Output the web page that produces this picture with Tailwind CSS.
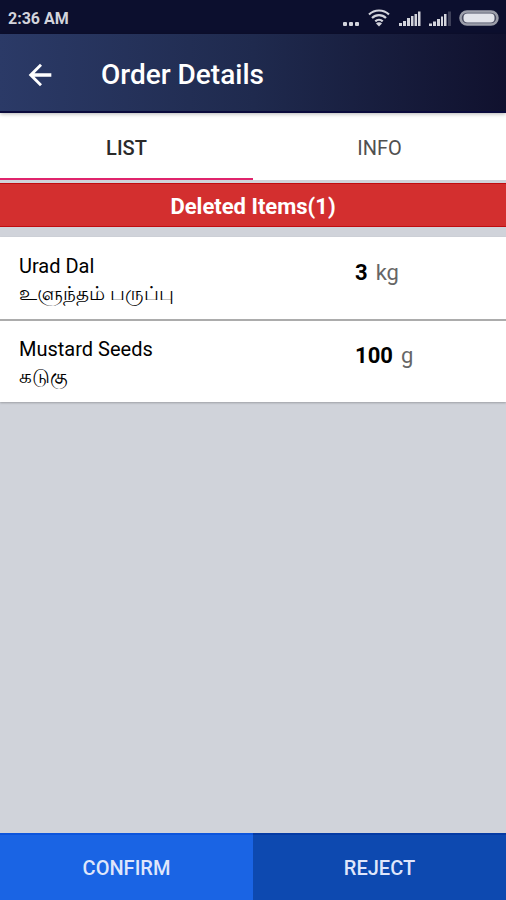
<!DOCTYPE html>
<html lang="en">
<head>
<meta charset="utf-8">
<meta name="viewport" content="width=device-width, initial-scale=1">
<title>Order Details</title>
<script src="https://cdn.jsdelivr.net/npm/@tailwindcss/browser@4"></script>
</head>
<body class="flex min-h-screen flex-col bg-[#d0d3da] font-[Roboto,'Noto_Sans',sans-serif] text-black">
  <div class="flex h-[34px] items-center justify-between bg-[#0c0f2e] pt-1 pr-[7px] pl-2 text-[#d3d4dc]">
    <span class="text-base leading-5 font-bold">2:36 AM</span>
    <div class="flex items-center">
      <svg class="mr-2 h-5 w-[18px]" viewBox="0 0 18 20" fill="currentColor" aria-hidden="true"><rect x="1" y="13" width="4" height="4" rx="1"/><rect x="7" y="13" width="4" height="4" rx="1"/><rect x="13" y="13" width="4" height="4" rx="1"/></svg>
      <svg class="mr-2 h-5 w-[22px]" viewBox="1 0 22 20" fill="none" stroke="currentColor" stroke-width="2.2" aria-hidden="true"><path d="M2 5.500a14.500 14.500 0 0 1 20 0M5 9a10 10 0 0 1 14 0M8.300 12.400a5.400 5.400 0 0 1 7.400 0"/><path d="M12 17.500l-3-3a4.200 4.200 0 0 1 6 0z" fill="currentColor" stroke="none"/></svg>
      <svg class="mr-2 h-5 w-[23px]" viewBox="0 0 23 20" fill="currentColor" aria-hidden="true"><path d="M1 14h3v3H1zM5 12h3v5H5zM9 9h3v8H9zM13 7h2.500v10H13zM16.500 5H19v12h-2.500zM20 2.500h2.500V17H20z"/></svg>
      <svg class="mr-2 h-5 w-[22px]" viewBox="0 0 22 20" fill="currentColor" aria-hidden="true"><path d="M0 14.500h3V17H0zM4 12.500h3V17H4zM8 10h3v7H8zM12 7.500h2V17h-2zM15 5h2.500v12H15z"/><path opacity=".25" d="M19 2.500h3V17h-3z"/></svg>
      <svg class="h-5 w-10" viewBox="0 0 40 20" aria-hidden="true"><rect x="1.500" y="2.500" width="37" height="13" rx="6.500" fill="#4b4d62" stroke="#9c9eaa" stroke-width="2.500"/><rect x="4.500" y="4.500" width="31" height="9" rx="4" fill="#e2e3ea"/></svg>
    </div>
  </div>

  <header class="z-10 flex h-[79px] items-center border-b-2 border-[#0a0a3c] bg-linear-to-r from-[#2b3a67] via-[#1f2a4e] to-[#10112e] pt-1 pl-6 text-white shadow-[0_1px_4px_rgba(0,0,0,0.3)]">
    <button type="button" aria-label="Back" class="flex size-8 items-center justify-center">
      <svg class="size-[34px] shrink-0" viewBox="0 0 24 24" fill="currentColor" aria-hidden="true"><path d="M20 10.800H8.130l5.290-5.390L12 4l-8 8 8 8 1.410-1.410L8.130 13.200H20z"/></svg>
    </button>
    <h1 class="ml-[45px] text-[28px] leading-8 font-medium">Order Details</h1>
  </header>

  <nav class="mb-[3px] grid h-[67px] grid-cols-2 bg-white text-center text-xl">
    <a href="#list" aria-current="page" class="flex items-center justify-center border-b-2 border-[#e0246c] pt-1 font-medium text-[#2a2a2a]">LIST</a>
    <a href="#info" class="flex items-center justify-center border-b-2 border-white pt-1 text-[#505050]">INFO</a>
  </nav>

  <main class="flex-1">
    <h2 class="flex h-11 items-center justify-center border-y border-[#c00c10] bg-[#d32f2f] pt-1 text-[22px] leading-8 font-bold text-white">Deleted Items(1)</h2>
    <ul id="list" class="mt-[10px] divide-y-2 divide-[#acacac] bg-white shadow-[0_1px_2px_rgba(0,0,0,0.25)]">
      <li class="flex h-[84px] items-start pt-4 pl-[19px]">
        <div class="w-[69%] text-xl leading-[27px]">
          <p>Urad Dal</p>
          <p lang="ta">உளுந்தம் பருப்பு</p>
        </div>
        <p class="flex gap-2 pt-1 text-[22px] leading-8"><span class="font-bold">3</span><span class="text-[#666]">kg</span></p>
      </li>
      <li class="flex h-[81px] items-start pt-[15px] pl-[19px]">
        <div class="w-[69%] text-xl leading-[27px]">
          <p>Mustard Seeds</p>
          <p lang="ta">கடுகு</p>
        </div>
        <p class="flex gap-2 pt-1 text-[22px] leading-8"><span class="font-bold">100</span><span class="text-[#666]">g</span></p>
      </li>
    </ul>
  </main>

  <footer class="grid h-[67px] grid-cols-2 text-xl font-medium text-[#dfe6fb]">
    <button type="button" class="border-t-2 border-[#0d55dc] bg-[#1a64e4]">CONFIRM</button>
    <button type="button" class="border-t-2 border-[#053ba4] bg-[#0d49b0]">REJECT</button>
  </footer>
</body>
</html>
